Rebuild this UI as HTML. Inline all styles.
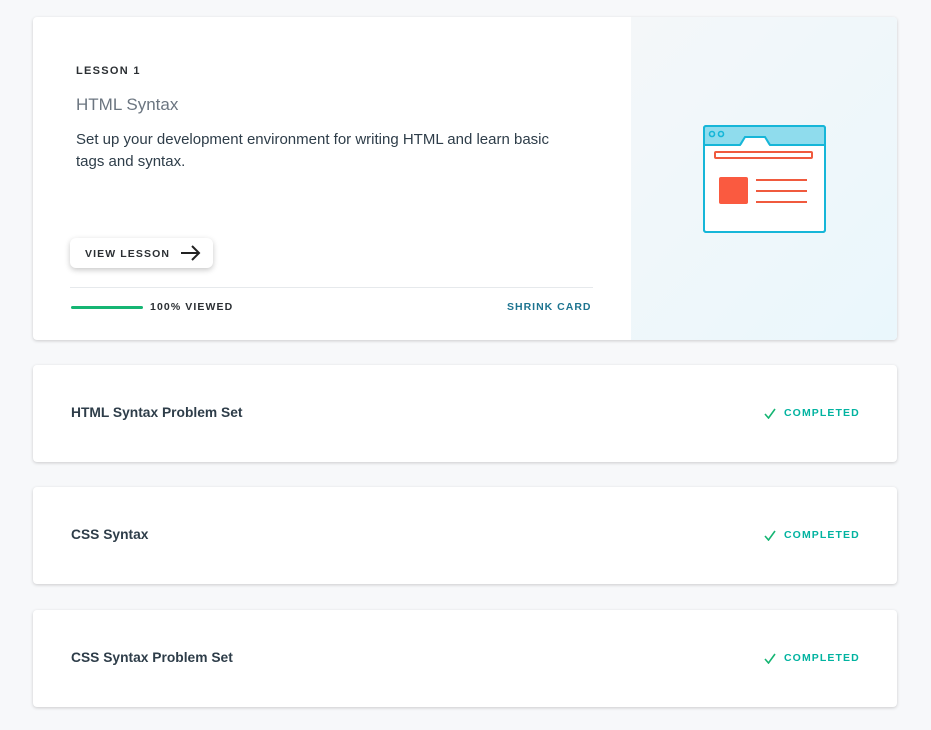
<!DOCTYPE html>
<html><head><style>
body{margin:0;background:#f7f8fa;font-family:"Liberation Sans",sans-serif;width:931px;height:730px;overflow:hidden;position:relative}
.card{position:absolute;left:33px;width:864px;background:#fff;border-radius:4px;box-shadow:0 1px 3px rgba(0,0,0,.18)}
.big{top:17px;height:323px;overflow:hidden}
.panel{position:absolute;left:598px;top:0;width:266px;height:323px;background:linear-gradient(135deg,#f4f7f9,#eaf7fc)}
.lbl{position:absolute;font-size:11px;font-weight:bold;letter-spacing:1.3px;color:#2b2f33}
.title{position:absolute;left:43px;top:78px;font-size:17px;color:#6b7580}
.desc{position:absolute;left:43px;top:112px;width:495px;font-size:15px;line-height:22px;color:#2e3d49}
.btn{position:absolute;left:37px;top:221px;width:143px;height:30px;border-radius:6px;background:#fff;box-shadow:0 2px 6px rgba(0,0,0,.22)}
.row{height:97px}
.row .t{position:absolute;left:38px;top:40px;font-size:13.8px;font-weight:bold;color:#2e3d49}
.row .c{position:absolute;top:42px;font-size:10.5px;letter-spacing:1.1px;color:#02b3a0;font-weight:bold}
</style></head><body>
<div class="card big">
<div class="lbl" style="left:43px;top:48px">LESSON 1</div>
<div class="title">HTML Syntax</div>
<div class="desc">Set up your development environment for writing HTML and learn basic tags and syntax.</div>
<div class="btn"><span class="lbl" style="left:15px;top:10px;font-size:10.5px;letter-spacing:1.1px">VIEW LESSON</span>
<svg style="position:absolute;left:110px;top:7px" width="22" height="16" viewBox="0 0 22 16"><path d="M1 8H19M12 1L19 8L12 15" stroke="#222" stroke-width="2" fill="none"/></svg></div>
<div style="position:absolute;left:37px;top:270px;width:523px;height:1px;background:#e6e9ec"></div>
<div style="position:absolute;left:38px;top:289px;width:72px;height:3px;background:#15b573;border-radius:2px"></div>
<div class="lbl" style="left:117px;top:284px;font-size:10.5px;letter-spacing:1.1px">100% VIEWED</div>
<div class="lbl" style="left:474px;top:284px;font-size:10.5px;letter-spacing:1px;color:#1d7490">SHRINK CARD</div>
<div class="panel">
<svg style="position:absolute;left:72px;top:108px" width="124" height="110" viewBox="0 0 124 110">
<rect x="1" y="1" width="121" height="106" rx="2" fill="#fff" stroke="#16b6d8" stroke-width="2"/>
<path d="M2 2H121V20H2Z" fill="#8fdced"/>
<path d="M38 21L43 12H61L66 21Z" fill="#fff"/>
<path d="M1 20H37L42 12H62L67 20H122" fill="none" stroke="#16b6d8" stroke-width="2"/>
<rect x="1" y="1" width="121" height="106" rx="2" fill="none" stroke="#16b6d8" stroke-width="2"/>
<circle cx="9" cy="9" r="2.5" fill="none" stroke="#16b6d8" stroke-width="1.6"/>
<circle cx="18" cy="9" r="2.5" fill="none" stroke="#16b6d8" stroke-width="1.6"/>
<rect x="12" y="27" width="97" height="6" rx="1" fill="none" stroke="#f05a3e" stroke-width="2"/>
<rect x="16" y="52" width="29" height="27" rx="2" fill="#fa5a40"/>
<path d="M53 55H104M53 66H104M53 77H104" stroke="#f05a3e" stroke-width="2"/>
</svg></div>
</div>
<div class="card row" style="top:365px"><div class="t">HTML Syntax Problem Set</div><svg style="position:absolute;left:731px;top:43px" width="12" height="11"><path d="M1 6L4.5 10L11 1" stroke="#15b573" stroke-width="1.6" fill="none"/></svg><div class="c" style="left:751px">COMPLETED</div></div>
<div class="card row" style="top:487px"><div class="t">CSS Syntax</div><svg style="position:absolute;left:731px;top:43px" width="12" height="11"><path d="M1 6L4.5 10L11 1" stroke="#15b573" stroke-width="1.6" fill="none"/></svg><div class="c" style="left:751px">COMPLETED</div></div>
<div class="card row" style="top:610px"><div class="t">CSS Syntax Problem Set</div><svg style="position:absolute;left:731px;top:43px" width="12" height="11"><path d="M1 6L4.5 10L11 1" stroke="#15b573" stroke-width="1.6" fill="none"/></svg><div class="c" style="left:751px">COMPLETED</div></div>
</body></html>
